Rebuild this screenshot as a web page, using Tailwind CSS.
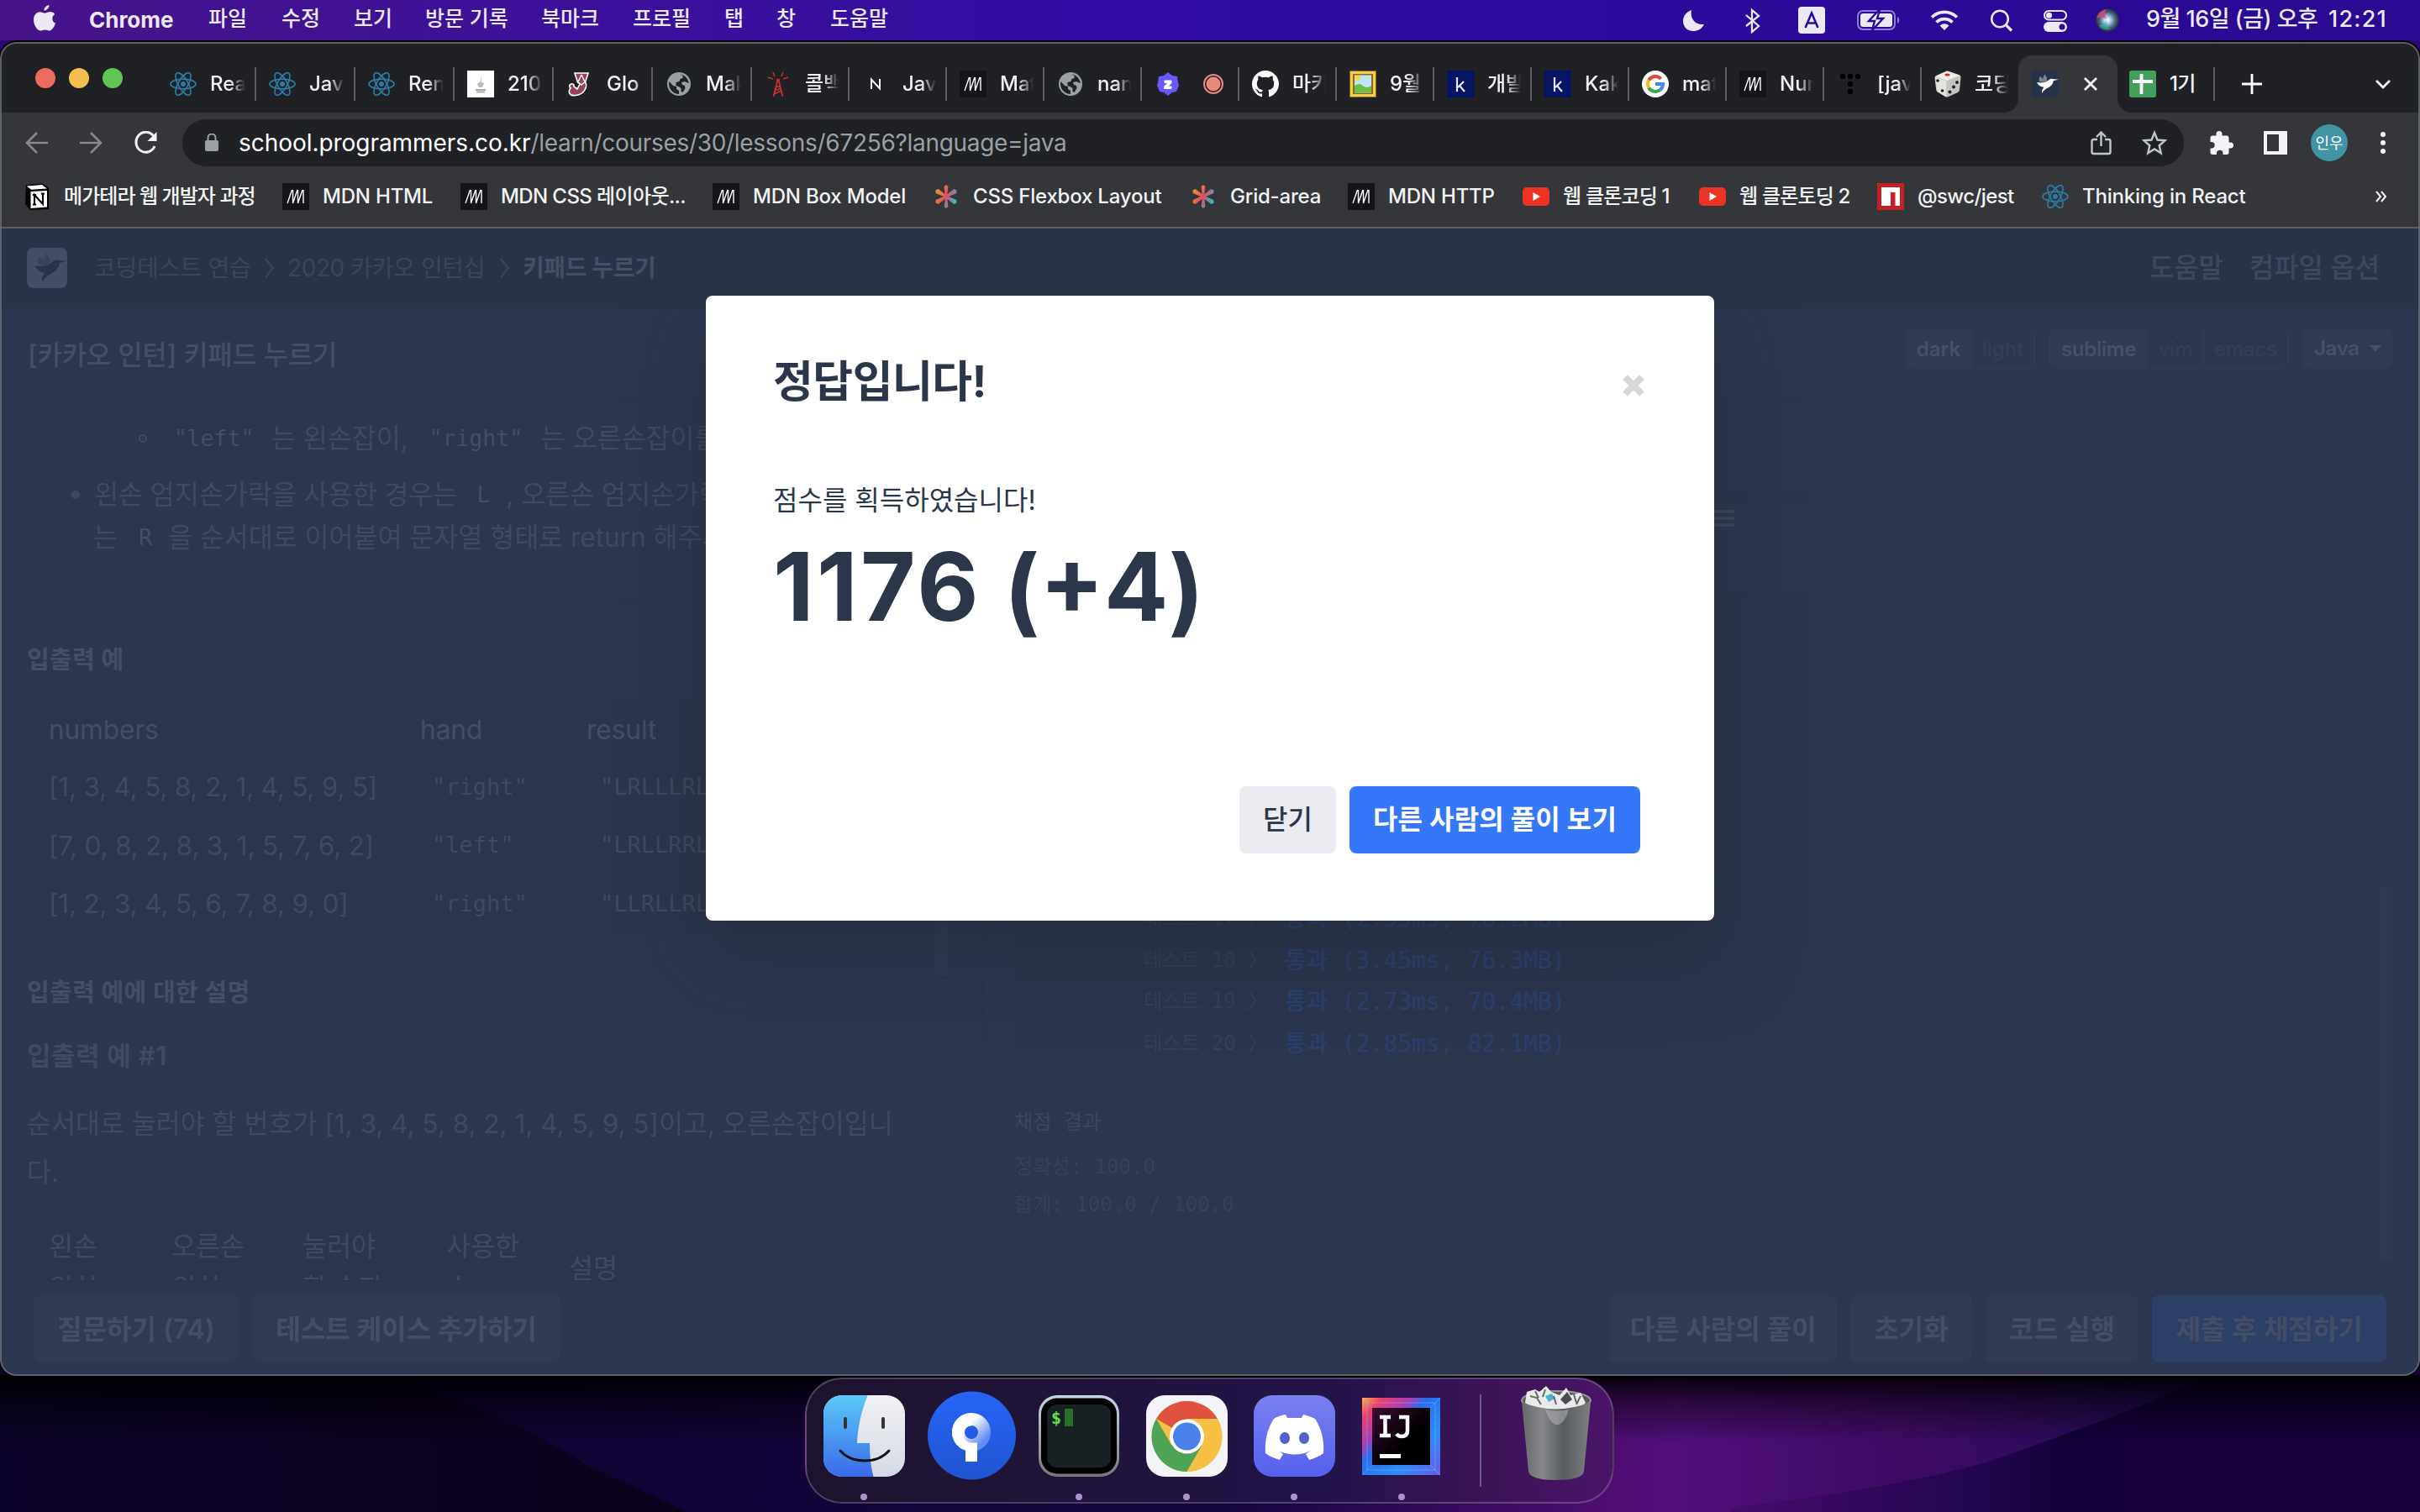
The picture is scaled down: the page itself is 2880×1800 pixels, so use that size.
<!DOCTYPE html>
<html lang="ko">
<head>
<meta charset="utf-8">
<title>키패드 누르기</title>
<script src="https://cdn.jsdelivr.net/npm/@tailwindcss/browser@4"></script>
</head>
<body class="relative h-[1800px] w-[2880px] overflow-hidden bg-[#0c0320] font-['Inter','Noto_Sans_CJK_KR',sans-serif]">

<!-- shared icon symbols -->
<svg class="absolute size-0">
  <defs><linearGradient id="ag" x1="0" y1=".2" x2="1" y2=".8"><stop offset=".1" stop-color="#ef8a2e"/><stop offset=".5" stop-color="#d9506a"/><stop offset=".9" stop-color="#39b5c4"/></linearGradient></defs>
  <symbol id="react" viewBox="0 0 32 32"><g fill="none" stroke="#2a7ba3" stroke-width="1.7"><ellipse cx="16" cy="16" rx="15" ry="5.8"/><ellipse cx="16" cy="16" rx="15" ry="5.8" transform="rotate(60 16 16)"/><ellipse cx="16" cy="16" rx="15" ry="5.8" transform="rotate(120 16 16)"/></g><circle cx="16" cy="16" r="3" fill="#2a7ba3"/></symbol>
  <symbol id="mdn" viewBox="0 0 32 32"><rect width="32" height="32" fill="#15141a"/><path d="M6 24 11.500 8M12.500 8V24M12.500 24 18 8M18.500 8V24M18.500 24 24 8M25 8V24" stroke="#fff" stroke-width="1.400" fill="none"/></symbol>
  <symbol id="globe" viewBox="0 0 32 32"><circle cx="16" cy="16" r="14" fill="#9aa0a6"/><path d="M4.500 13 9 18l4 1v3l3 2v4A12 12 0 0 1 4.500 13ZM17 4.200c6 .8 10 5.500 10.800 10.800L25 14l-2-1-4 1 1 3 3 1 .5 3-3 5-2-1v-4l-3-2-3-1v-4l4-1 1-3 3-1V6Z" fill="#202124"/></symbol>
  <symbol id="kicon" viewBox="0 0 32 32"><rect width="32" height="32" fill="#061463"/><path d="M12 8v17M20 13l-7 7M15 18l6 7" stroke="#e5e8ff" stroke-width="2.200" fill="none"/></symbol>
  <symbol id="yt" viewBox="0 0 32 32"><rect y="5" width="32" height="22" rx="5" fill="#ea3323"/><path d="m12.500 11 8.500 5-8.500 5Z" fill="#fff"/></symbol>
  <symbol id="aster" viewBox="0 0 32 32"><path d="M16 2l2.400 2-1 9 8-6 3.200 1.500-.4 3.400-9 4.100 9 4.100.4 3.400-3.200 1.500-8-6 1 9L16 30l-2.400-2 1-9-8 6-3.200-1.500.4-3.400 9-4.100-9-4.100-.4-3.400L6.600 7l8 6-1-9Z" fill="url(#ag)"/></symbol>
  <symbol id="bird" viewBox="0 0 32 32"><path d="M6 14C10 15 16.500 14.500 20 11.500c1.500-1.800 4-2.400 5.600-1.300l6.400.2-6.300 1.800c-.4 4.600-3.600 6.800-7 8.600-2.600 1.400-4.600 2.900-6.500 6.200-.8-3 .7-5.600 2.300-7.200C10.500 19.500 7.500 17 6 14Z"/><path d="M15.500 4.500c2 2.500 3 5 2.600 7.800l-3.600 1.200c-2-2.800-1.300-6 1-9ZM9.500 7c3 1.200 4.500 3.600 4.800 6.600l-5-.3C8.300 11 8.500 9 9.500 7Z" opacity=".4"/></symbol>
</svg>

<!-- wallpaper -->
<svg class="absolute inset-0 h-[1800px] w-[2880px]" viewBox="0 0 2880 1800">
  <defs>
    <linearGradient id="wl" x1="0" x2="1"><stop offset="0" stop-color="#0c0328"/><stop offset="1" stop-color="#0b011a"/></linearGradient>
    <linearGradient id="wm" x1="0" x2="1"><stop offset="0" stop-color="#100230"/><stop offset=".7" stop-color="#140540"/><stop offset="1" stop-color="#4a0e72"/></linearGradient>
    <linearGradient id="wp" gradientUnits="userSpaceOnUse" x1="1820" x2="2560" y1="0" y2="0"><stop offset="0" stop-color="#4b0b68"/><stop offset=".24" stop-color="#500f7c"/><stop offset=".6" stop-color="#3e0b66"/><stop offset="1" stop-color="#220a58"/></linearGradient>
    <linearGradient id="wr" gradientUnits="userSpaceOnUse" x1="2080" x2="2560" y1="0" y2="0"><stop offset="0" stop-color="#440c6c"/><stop offset=".55" stop-color="#200650"/><stop offset=".8" stop-color="#130138"/><stop offset="1" stop-color="#16003a"/></linearGradient>
    <linearGradient id="ws" x1="0" y1="0" x2="0" y2="1"><stop offset="0" stop-color="#000" stop-opacity=".92"/><stop offset=".4" stop-color="#000" stop-opacity=".5"/><stop offset="1" stop-color="#000" stop-opacity="0"/></linearGradient>
  </defs>
  <rect y="1600" width="900" height="200" fill="url(#wl)"/>
  <path d="M430 1630Q600 1680 700 1745L819 1800H1900V1630Z" fill="url(#wm)"/>
  <path d="M1800 1630H2880V1800H1880Z" fill="url(#wp)"/>
  <path d="M2880 1600V1800H2060V1795Q2300 1765 2387 1733L2500 1692Q2600 1655 2660 1620Z" fill="url(#wr)"/>
  <rect y="1637" width="2880" height="80" fill="url(#ws)"/>
  <rect y="0" width="2880" height="80" fill="#2a0a70"/>
</svg>

<!-- menu bar -->
<div class="relative flex h-12 items-center bg-[linear-gradient(90deg,#461488_0%,#3b119b_25%,#310da3_45%,#2b0a9a_75%,#290a90_100%)] text-[25px] font-medium text-[#ece8f6]">
  <svg class="ml-[39px] h-8 w-7 shrink-0 -translate-y-0.5" viewBox="0 0 28 32" fill="#ece8f6"><path d="M19.500 0c.2 3-2.600 6.600-6 6.600C13.200 3.500 16 .4 19.500 0ZM26.200 10.900c-4.300 2.700-3.600 8.900.9 10.700-1.200 3.600-4.100 9-7 9-2 0-2.900-1.200-5.400-1.200s-3.500 1.200-5.400 1.200C5.500 30.600 1 24 1 17.500 1 11.500 4.800 8.200 8.600 8.200c2.500 0 4.300 1.500 5.900 1.500 1.500 0 3.700-1.600 6.600-1.600 1.800 0 3.900 1 5.100 2.800Z"/></svg>
  <span class="ml-[39px] w-[142px] -translate-y-px text-[26px] font-bold tracking-[0px]">Chrome</span>
  <span class="w-[87px] -translate-y-px">파일</span><span class="w-[86px] -translate-y-px">수정</span><span class="w-[85px] -translate-y-px">보기</span><span class="w-[138px] -translate-y-px whitespace-nowrap">방문 기록</span><span class="w-[109px] -translate-y-px">북마크</span><span class="w-[109px] -translate-y-px">프로필</span><span class="w-[62px] -translate-y-px">탭</span><span class="w-[64px] -translate-y-px">창</span><span class="-translate-y-px">도움말</span>
  <div class="absolute right-0 top-0 flex h-12 w-[880px] items-center text-[27px]">
    <svg class="ml-[1px] h-12 w-[540px] shrink-0" viewBox="2001 0 540 48" fill="#ece8f6">
      <path d="M2013 12c-2 10 4 18 15 17-3 6-8 8-13 8-7 0-12-5-12-12 0-6 4-11 10-13Z"/>
      <path d="M2078 18l15 13-8 7V12l8 7-15 12" fill="none" stroke="#ece8f6" stroke-width="2.300"/>
      <rect x="2140" y="8" width="32" height="32" rx="4"/>
      <path d="M2148.500 33 2156 15.500 2163.500 33M2151 27.500h10" fill="none" stroke="#2b0a9a" stroke-width="2.500"/>
      <rect x="2211" y="13" width="44" height="22" rx="6" fill="none" stroke="#8d7fd0" stroke-width="2"/><path d="M2258 20c3 1 3 7 0 8Z" fill="#8d7fd0"/><rect x="2214" y="16" width="38" height="16" rx="3"/>
      <path d="M2236 12l-12 13h7l-3 11 13-14h-7l3-10Z" stroke="#2b0a9a" stroke-width="2.400"/>
      <g fill="none" stroke="#ece8f6" stroke-width="3.800"><path d="M2299 20.500a21.500 21.500 0 0 1 30 0M2304.500 26.500a13.500 13.500 0 0 1 19 0"/></g><path d="M2308.500 30.500a8 8 0 0 1 11 0l-5.500 5.500Z"/>
      <circle cx="2380" cy="22.500" r="9.800" fill="none" stroke="#ece8f6" stroke-width="2.500"/><path d="m2387 29.500 7 7" stroke="#ece8f6" stroke-width="3.200"/>
      <rect x="2433" y="13" width="26" height="10.500" rx="5.200" fill="none" stroke="#ece8f6" stroke-width="2"/><circle cx="2438.500" cy="18.200" r="3.500"/><rect x="2432" y="26" width="28" height="12" rx="6"/><circle cx="2454" cy="32" r="3.500" fill="#2b0a9a"/>
      <defs><radialGradient id="siri"><stop offset="0" stop-color="#fff"/><stop offset=".3" stop-color="#a9c8e8"/><stop offset=".65" stop-color="#4a6a8c"/><stop offset="1" stop-color="#2a2540"/></radialGradient></defs>
      <g transform="translate(-12.500)"><circle cx="2520.500" cy="24" r="14" fill="url(#siri)"/><path d="M2508 22c0-6 7-11 12-11-4 3-3 8 0 12-4-3-8-3-12-1Z" fill="#d94a6b" opacity=".85"/><path d="M2510 30c4 5 9 6 14 5-4-2-5-7-4-11-3 4-6 6-10 6Z" fill="#2dbd9b" opacity=".6"/></g>
    </svg>
    <span class="ml-[13px] w-[217px] -translate-y-px whitespace-nowrap tracking-[-0.5px]">9월 16일 (금) 오후</span><span class="-translate-y-px whitespace-nowrap tracking-[1.2px]">12:21</span>
  </div>
</div>

<!-- browser window -->
<div class="relative mt-[2px] flex h-[1588px] flex-col overflow-hidden rounded-[20px] bg-[#35363a] shadow-[0_0_0_2px_#000]">

  <!-- tab strip -->
  <div class="flex h-[84px] shrink-0 items-end bg-[#202124] text-[24px] font-medium text-[#f1f3f4]">
    <div class="flex h-[82px] w-[187px] shrink-0 gap-4 pl-[42px] pt-[29px]"><i class="size-6 rounded-full bg-[#ed6a5e]"></i><i class="size-6 rounded-full bg-[#f5bf4f]"></i><i class="size-6 rounded-full bg-[#61c554]"></i></div>
    <div class="flex h-[68px] w-[118px] shrink-0 items-center pl-[15px]"><svg class="size-8 shrink-0"><use href="#react"/></svg><span class="ml-4 w-[42px] overflow-hidden whitespace-nowrap [mask-image:linear-gradient(90deg,#000_55%,transparent)]">Rea</span><i class="ml-auto h-10 w-[2px] bg-[#5b5c5f]"></i></div>
    <div class="flex h-[68px] w-[118px] shrink-0 items-center pl-[15px]"><svg class="size-8 shrink-0"><use href="#react"/></svg><span class="ml-4 w-[42px] overflow-hidden whitespace-nowrap [mask-image:linear-gradient(90deg,#000_55%,transparent)]">Jav</span><i class="ml-auto h-10 w-[2px] bg-[#5b5c5f]"></i></div>
    <div class="flex h-[68px] w-[118px] shrink-0 items-center pl-[15px]"><svg class="size-8 shrink-0"><use href="#react"/></svg><span class="ml-4 w-[42px] overflow-hidden whitespace-nowrap [mask-image:linear-gradient(90deg,#000_55%,transparent)]">Ren</span><i class="ml-auto h-10 w-[2px] bg-[#5b5c5f]"></i></div>
    <div class="flex h-[68px] w-[118px] shrink-0 items-center pl-[15px]"><svg class="size-8 shrink-0" viewBox="0 0 32 32"><rect width="32" height="32" fill="#fff"/><path d="M17 6v8l3 1-2 5h-4l-2-4 4-3Z" fill="#bbb"/><path d="M10 23h12M11 25.500h10" stroke="#aaa" stroke-width="2"/></svg><span class="ml-4 w-[42px] overflow-hidden whitespace-nowrap [mask-image:linear-gradient(90deg,#000_55%,transparent)]">210</span><i class="ml-auto h-10 w-[2px] bg-[#5b5c5f]"></i></div>
    <div class="flex h-[68px] w-[118px] shrink-0 items-center pl-[15px]"><svg class="size-8 shrink-0" viewBox="0 0 32 32"><path d="M10 3h16l-3.500 11c2.500 3 1 8-2.500 11.500C16 30 6 31 4 27.500c-1.500-3-.5-5 1-6.500a2.800 2.800 0 0 1 .5-5c2.300-1 4.200 1 3.500 3l4 3 3-6-2.500-2Z" fill="#99425b" stroke="#fff" stroke-width="1.600"/><path d="M18 5l-4 8.500M18 5l4 8.500M14.500 14l3.500 3 3.500-3" stroke="#fff" stroke-width="1.400" fill="none"/></svg><span class="ml-4 w-[42px] overflow-hidden whitespace-nowrap [mask-image:linear-gradient(90deg,#000_70%,#fff8)]">Glo</span><i class="ml-auto h-10 w-[2px] bg-[#5b5c5f]"></i></div>
    <div class="flex h-[68px] w-[118px] shrink-0 items-center pl-[15px]"><svg class="size-8 shrink-0"><use href="#globe"/></svg><span class="ml-4 w-[42px] overflow-hidden whitespace-nowrap [mask-image:linear-gradient(90deg,#000_55%,transparent)]">Mak</span><i class="ml-auto h-10 w-[2px] bg-[#5b5c5f]"></i></div>
    <div class="flex h-[68px] w-[116px] shrink-0 items-center pl-[15px]"><svg class="size-8 shrink-0" viewBox="0 0 32 32" fill="none" stroke="#c4302b" stroke-width="1.800"><path d="M15 13 10.500 31M17 13l4.500 18M13 19h6M12 24l7.500-3M11.500 28l8-4"/><circle cx="16" cy="11.500" r="1.200" fill="#c4302b"/><path d="M12 7 10 2M20 7l2-5M10 10 4 8M22 10l6-2" stroke-width="1.600"/></svg><span class="ml-4 w-[40px] overflow-hidden whitespace-nowrap [mask-image:linear-gradient(90deg,#000_55%,transparent)]">콜백</span><i class="ml-auto h-10 w-[2px] bg-[#5b5c5f]"></i></div>
    <div class="flex h-[68px] w-[116px] shrink-0 items-center pl-[15px]"><svg class="size-8 shrink-0" viewBox="0 0 32 32"><path d="M11 22V10.500L21 21.500V10" fill="none" stroke="#fff" stroke-width="2"/></svg><span class="ml-4 w-[40px] overflow-hidden whitespace-nowrap [mask-image:linear-gradient(90deg,#000_55%,transparent)]">Jav</span><i class="ml-auto h-10 w-[2px] bg-[#5b5c5f]"></i></div>
    <div class="flex h-[68px] w-[116px] shrink-0 items-center pl-[15px]"><svg class="size-8 shrink-0"><use href="#mdn"/></svg><span class="ml-4 w-[40px] overflow-hidden whitespace-nowrap [mask-image:linear-gradient(90deg,#000_55%,transparent)]">Mat</span><i class="ml-auto h-10 w-[2px] bg-[#5b5c5f]"></i></div>
    <div class="flex h-[68px] w-[116px] shrink-0 items-center pl-[15px]"><svg class="size-8 shrink-0"><use href="#globe"/></svg><span class="ml-4 w-[40px] overflow-hidden whitespace-nowrap [mask-image:linear-gradient(90deg,#000_55%,transparent)]">nan</span><i class="ml-auto h-10 w-[2px] bg-[#5b5c5f]"></i></div>
    <div class="flex h-[68px] w-[116px] shrink-0 items-center pl-[15px]"><svg class="size-8 shrink-0" viewBox="0 0 32 32"><path d="m16 2 5 4 6 1 1 7 1 4-3 7-5 1-5 4-5-4-5-1-3-7 1-4 1-7 6-1Z" fill="#6758ff"/><path d="M12 12h8v2.500L16 19h4v2.500h-8.500V19l4.500-4.500h-4Z" fill="#fff" stroke="#fff"/></svg><svg class="ml-[22px] size-8 shrink-0" viewBox="0 0 32 32"><circle cx="16" cy="16" r="11" fill="none" stroke="#e8897e" stroke-width="2"/><circle cx="16" cy="16" r="8.500" fill="#e8897e"/></svg><i class="ml-auto h-10 w-[2px] bg-[#5b5c5f]"></i></div>
    <div class="flex h-[68px] w-[116px] shrink-0 items-center pl-[15px]"><svg class="size-8 shrink-0" viewBox="0 0 16 16" fill="#fff"><path d="M8 0C3.580 0 0 3.580 0 8c0 3.540 2.290 6.530 5.470 7.590.4.070.55-.17.55-.38 0-.19-.01-.82-.01-1.490-2.010.37-2.530-.49-2.690-.94-.09-.23-.48-.94-.82-1.130-.28-.15-.68-.52-.01-.53.63-.01 1.080.58 1.230.82.72 1.210 1.870.87 2.330.66.07-.52.28-.87.51-1.070-1.780-.2-3.640-.89-3.640-3.950 0-.87.31-1.590.82-2.150-.08-.2-.36-1.020.08-2.120 0 0 .67-.21 2.200.82.64-.18 1.320-.27 2-.27s1.360.09 2 .27c1.530-1.040 2.200-.82 2.200-.82.44 1.100.16 1.920.08 2.120.51.56.82 1.270.82 2.150 0 3.070-1.870 3.750-3.650 3.950.29.25.54.73.54 1.480 0 1.070-.01 1.930-.01 2.200 0 .21.15.46.55.38A8.010 8.010 0 0 0 16 8c0-4.420-3.580-8-8-8Z"/></svg><span class="ml-4 w-[40px] overflow-hidden whitespace-nowrap [mask-image:linear-gradient(90deg,#000_55%,transparent)]">마키</span><i class="ml-auto h-10 w-[2px] bg-[#5b5c5f]"></i></div>
    <div class="flex h-[68px] w-[116px] shrink-0 items-center pl-[15px]"><svg class="size-8 shrink-0" viewBox="0 0 32 32"><rect width="32" height="32" rx="1" fill="#8b6a1d"/><rect x="2.500" y="2.500" width="27" height="27" fill="none" stroke="#f2cf4d" stroke-width="3"/><rect x="6" y="5.500" width="20" height="21" fill="#bfe6f5"/><path d="M6 18q6-4 10 0t10 0v8.500H6Z" fill="#6cc04a"/><circle cx="9.500" cy="9" r="3" fill="#f7d83c"/></svg><span class="ml-4 w-[40px] overflow-hidden whitespace-nowrap [mask-image:linear-gradient(90deg,#000_55%,transparent)]">9월</span><i class="ml-auto h-10 w-[2px] bg-[#5b5c5f]"></i></div>
    <div class="flex h-[68px] w-[116px] shrink-0 items-center pl-[15px]"><svg class="size-8 shrink-0"><use href="#kicon"/></svg><span class="ml-4 w-[40px] overflow-hidden whitespace-nowrap [mask-image:linear-gradient(90deg,#000_55%,transparent)]">개발</span><i class="ml-auto h-10 w-[2px] bg-[#5b5c5f]"></i></div>
    <div class="flex h-[68px] w-[116px] shrink-0 items-center pl-[15px]"><svg class="size-8 shrink-0"><use href="#kicon"/></svg><span class="ml-4 w-[40px] overflow-hidden whitespace-nowrap [mask-image:linear-gradient(90deg,#000_55%,transparent)]">Kak</span><i class="ml-auto h-10 w-[2px] bg-[#5b5c5f]"></i></div>
    <div class="flex h-[68px] w-[116px] shrink-0 items-center pl-[15px]"><svg class="size-8 shrink-0" viewBox="0 0 32 32"><circle cx="16" cy="16" r="16" fill="#fff"/><g fill="none" stroke-width="4"><path d="M8.200 11.500A9 9 0 0 1 22.500 9.800" stroke="#ea4335"/><path d="M8.200 20.500a9 9 0 0 1 0-9" stroke="#fbbc05"/><path d="M22 22.700a9 9 0 0 1-13.800-2.200" stroke="#34a853"/><path d="M16 16h9a9 9 0 0 1-3.200 6.900" stroke="#4285f4"/></g></svg><span class="ml-4 w-[40px] overflow-hidden whitespace-nowrap [mask-image:linear-gradient(90deg,#000_55%,transparent)]">mat</span><i class="ml-auto h-10 w-[2px] bg-[#5b5c5f]"></i></div>
    <div class="flex h-[68px] w-[116px] shrink-0 items-center pl-[15px]"><svg class="size-8 shrink-0"><use href="#mdn"/></svg><span class="ml-4 w-[40px] overflow-hidden whitespace-nowrap [mask-image:linear-gradient(90deg,#000_55%,transparent)]">Num</span><i class="ml-auto h-10 w-[2px] bg-[#5b5c5f]"></i></div>
    <div class="flex h-[68px] w-[116px] shrink-0 items-center pl-[15px]"><svg class="size-8 shrink-0" viewBox="0 0 32 32" fill="#000"><circle cx="7" cy="7" r="3.200"/><circle cx="16" cy="7" r="3.200"/><circle cx="25" cy="7" r="3.200"/><circle cx="16" cy="16" r="3.200"/><circle cx="16" cy="25" r="3.200"/></svg><span class="ml-4 w-[40px] overflow-hidden whitespace-nowrap [mask-image:linear-gradient(90deg,#000_60%,transparent)]">[jav</span><i class="ml-auto h-10 w-[2px] bg-[#5b5c5f]"></i></div>
    <div class="flex h-[68px] w-[115px] shrink-0 items-center pl-[15px]"><svg class="size-8 shrink-0" viewBox="0 0 32 32"><path d="M16 .5 29.500 5c1.500.8 2 1.500 2 3l-1.500 15c-.2 1.500-1 2-2 3L16.500 31.200c-1 .5-2 .5-3 0L4 25.500c-1-.7-1.700-1.500-1.900-3L.5 9c0-1.500.5-2.500 1.700-3L14 .7Z" fill="#c4c4c1"/><path d="M15.500.5 30 6 15 12 1.500 7Z" fill="#ececea"/><path d="M1 7.500 14.500 12.500 14 31.500 3.500 25Z" fill="#e2e2df"/><ellipse cx="15.500" cy="5" rx="3" ry="1.500" fill="#d22"/><g fill="#222"><circle cx="4" cy="12" r="1.800"/><circle cx="9.500" cy="24" r="1.800"/><circle cx="27" cy="14" r="2"/><circle cx="23" cy="19.500" r="2"/><circle cx="18.500" cy="25.500" r="2"/></g></svg><span class="ml-4 w-[40px] overflow-hidden whitespace-nowrap [mask-image:linear-gradient(90deg,#000_55%,transparent)]">코딩</span></div>
    <div class="relative flex h-[68px] w-[118px] shrink-0 items-center rounded-t-2xl bg-[#35363a] pl-[16px]">
      <i class="absolute -left-4 bottom-0 size-4 bg-[radial-gradient(circle_at_0_0,transparent_15.500px,#35363a_16px)]"></i><i class="absolute -right-4 bottom-0 size-4 bg-[radial-gradient(circle_at_100%_0,transparent_15.500px,#35363a_16px)]"></i>
      <svg class="size-8 rounded bg-[#263247] fill-white"><use href="#bird"/></svg>
      <svg class="ml-[29px] size-[18px]" viewBox="0 0 18 18"><path d="M2 2l14 14M16 2 2 16" stroke="#f1f3f4" stroke-width="2.800"/></svg>
    </div>
    <div class="flex h-[68px] w-[116px] shrink-0 items-center pl-[14px]"><svg class="size-8 shrink-0" viewBox="0 0 32 32"><rect width="32" height="32" rx="3" fill="#43a05c"/><path d="M14.500 4v24M4 13h24" stroke="#fff" stroke-width="3.800"/></svg><span class="ml-4 w-[42px] whitespace-nowrap tracking-[-0.8px]">1기</span><i class="ml-auto h-10 w-[2px] bg-[#5b5c5f]"></i></div>
    <svg class="ml-[32px] mb-[22px] size-6 shrink-0" viewBox="0 0 24 24"><path d="M12 0v24M0 12h24" stroke="#fff" stroke-width="2.800"/></svg>
    <svg class="ml-[135px] mb-[25px] size-[18px] shrink-0" viewBox="0 0 18 18"><path d="M1 5l8 8 8-8" stroke="#f1f3f4" stroke-width="2.800" fill="none"/></svg>
  </div>

  <!-- address row -->
  <div class="flex h-[72px] shrink-0 items-center">
    <svg class="ml-[30px] h-7 w-[158px] shrink-0" viewBox="0 0 158 28" fill="none" stroke-width="2.600"><path d="M27 14H2M14 2 2 14l12 12M65 14h25M78 2l12 12-12 12" stroke="#87888b"/><path d="M153 6.500A11.500 12 0 1 0 154 18" stroke="#f1f3f4" stroke-width="3"/><path d="M156.500 1v11h-11Z" fill="#f1f3f4"/></svg>
    <div class="ml-[29px] flex h-14 w-[2382px] shrink-0 items-center rounded-full bg-[#202124] text-[28px] text-[#9aa0a6]">
      <svg class="ml-[27px] h-[22px] w-4" viewBox="0 0 16 22"><rect y="8" width="16" height="13" rx="2" fill="#9aa0a6"/><path d="M3.500 8V5a4.500 4.500 0 0 1 9 0v3" stroke="#9aa0a6" stroke-width="2" fill="none"/></svg>
      <span class="ml-6 whitespace-nowrap tracking-[-0.3px]"><span class="tracking-[-0.05px] text-white">school.programmers.co.kr</span>/learn/courses/30/lessons/67256?language=java</span>
      <svg class="ml-auto mr-[19px] h-[30px] w-[92px]" viewBox="0 0 92 30" fill="none" stroke="#c3c6c9" stroke-width="2.400"><path d="M8 11H3.500A2 2 0 0 0 1.500 13v13a2 2 0 0 0 2 2h18a2 2 0 0 0 2-2V13a2 2 0 0 0-2-2H17M12.500 19V3M7 8l5.500-5.500L18 8"/><path d="m76 3 3.500 8.500 9 .8-6.800 6 2 8.900-7.700-4.700-7.700 4.700 2-8.900-6.800-6 9-.8Z"/></svg>
    </div>
    <svg class="ml-[30px] size-[30px] shrink-0" viewBox="0 0 30 30"><path d="M24.500 14.500h-2V9a2.500 2.500 0 0 0-2.500-2.500h-5.500v-2a3.500 3.500 0 0 0-7 0v2H3A2.500 2.500 0 0 0 .5 9v5h2a3.800 3.800 0 0 1 0 7.500h-2v5A2.500 2.500 0 0 0 3 29h5v-2a3.800 3.800 0 0 1 7.500 0v2H20a2.500 2.500 0 0 0 2.500-2.500v-5h2a3.500 3.500 0 0 0 0-7Z" fill="#f1f3f4" transform="translate(1)"/></svg>
    <svg class="ml-[35px] size-7 shrink-0" viewBox="0 0 28 28"><path d="M0 0h28v28H0ZM4 4v20h14V4Z" fill="#f1f3f4" fill-rule="evenodd"/></svg>
    <div class="ml-[28px] flex size-11 shrink-0 items-center justify-center rounded-full bg-[#4094a6] text-[18px] text-white">인우</div>
    <svg class="ml-[38px] h-7 w-2 shrink-0" viewBox="0 0 8 28" fill="#f1f3f4"><circle cx="4" cy="4" r="3"/><circle cx="4" cy="14" r="3"/><circle cx="4" cy="24" r="3"/></svg>
  </div>

  <!-- bookmarks -->
  <div class="flex h-[66px] shrink-0 items-center border-b-2 border-[#5f5f61] pb-2 pl-[28px] text-[24px] leading-8 font-medium tracking-[-0.2px] whitespace-nowrap text-[#f1f3f4]">
    <div class="flex w-[308px] shrink-0 gap-4"><svg class="size-8" viewBox="0 0 32 32"><path d="M3 2 23 .5l7 5.500v25L8 32l-6-7Z" fill="#000"/><path d="M4 3.500 22 2l6 4.500-19 1.200Z" fill="#fff"/><path d="M8.500 10 28 9v19.500L8.500 30Z" fill="#fff"/><path d="M13 25.500V14l10 11V12.500M11 14h4M21 12.500h4M11 25.500h4" stroke="#000" stroke-width="2.200" fill="none"/></svg><span class="tracking-[-0.95px]">메가테라 웹 개발자 과정</span></div>
    <div class="flex w-[212px] shrink-0 gap-4"><svg class="size-8"><use href="#mdn"/></svg><span>MDN HTML</span></div>
    <div class="flex w-[300px] shrink-0 gap-4"><svg class="size-8"><use href="#mdn"/></svg><span class="tracking-[-0.6px]">MDN CSS 레이아웃...</span></div>
    <div class="flex w-[262px] shrink-0 gap-4"><svg class="size-8"><use href="#mdn"/></svg><span>MDN Box Model</span></div>
    <div class="flex w-[306px] shrink-0 gap-4"><svg class="size-8"><use href="#aster"/></svg><span>CSS Flexbox Layout</span></div>
    <div class="flex w-[188px] shrink-0 gap-4"><svg class="size-8"><use href="#aster"/></svg><span>Grid-area</span></div>
    <div class="flex w-[208px] shrink-0 gap-4"><svg class="size-8"><use href="#mdn"/></svg><span>MDN HTTP</span></div>
    <div class="flex w-[210px] shrink-0 gap-4"><svg class="size-8"><use href="#yt"/></svg><span class="tracking-[-0.8px]">웹 클론코딩 1</span></div>
    <div class="flex w-[212px] shrink-0 gap-4"><svg class="size-8"><use href="#yt"/></svg><span class="tracking-[-0.8px]">웹 클론토딩 2</span></div>
    <div class="flex w-[196px] shrink-0 gap-4"><svg class="size-8" viewBox="0 0 32 32"><rect width="32" height="32" fill="#c12127"/><path d="M5 5h22v22h-5.500V11H16v16H5Z" fill="#fff"/></svg><span class="tracking-[-0.6px]">@swc/jest</span></div>
    <div class="flex w-[397px] shrink-0 gap-4"><svg class="size-8"><use href="#react"/></svg><span>Thinking in React</span></div>
    <svg class="h-3.5 w-3.5 shrink-0" viewBox="0 0 14 14"><path d="M1 1l5 6-5 6M7 1l5 6-5 6" stroke="#f1f3f4" stroke-width="2" fill="none"/></svg>
  </div>

  <!-- page, dimmed behind the dialog -->
  <div class="flex h-[1366px] flex-col bg-[#2c364e] text-[#414b61]">
    <header class="flex h-[95px] shrink-0 items-center bg-[#283347] pb-0.5 pl-8 text-[28px] whitespace-nowrap text-[#3b455a]">
      <svg class="mr-[32px] size-12 rounded-lg bg-[#454e64] fill-[#283347]"><use href="#bird"/></svg>
      <span class="w-[203px] tracking-[-0.2px]">코딩테스트 연습</span>
      <svg class="h-6 w-3" viewBox="0 0 12 24"><path d="M1 1l9 11-9 11" stroke="#3b455a" stroke-width="2" fill="none"/></svg>
      <span class="ml-[15px] w-[253px] tracking-[-0.4px]">2020 카카오 인턴십</span>
      <svg class="h-6 w-3" viewBox="0 0 12 24"><path d="M1 1l9 11-9 11" stroke="#3b455a" stroke-width="2" fill="none"/></svg>
      <span class="ml-[15px] font-bold tracking-[-0.4px] text-[#454e64]">키패드 누르기</span>
      <div class="ml-auto flex gap-[31px] pr-12 text-[32px] font-medium tracking-[-0.1px] text-[#3e485d]"><span>도움말</span><span>컴파일 옵션</span></div>
    </header>
    <div class="flex h-[110px] shrink-0 border-b-2 border-[#2a344a] pl-[33px] text-[#454e64]">
      <h2 class="text-[32px] leading-[111px] font-medium tracking-[-0.3px]">[카카오 인턴] 키패드 누르기</h2>
      <div class="mt-[24px] ml-auto flex h-12 gap-4 pr-8 text-[24px] leading-[46px] font-semibold whitespace-nowrap text-[#475066]">
        <div class="flex w-[155px] overflow-hidden rounded-lg border-2 border-[#303a52]"><span class="w-[78px] bg-[#303a52] pr-0.5 text-center">dark</span><span class="flex-1 text-center font-medium text-[#343e57]">light</span></div>
        <div class="flex w-[286px] overflow-hidden rounded-lg border-2 border-[#303a52]"><span class="w-[117px] bg-[#303a52] pr-0.5 text-center tracking-[-0.3px]">sublime</span><span class="w-[66px] border-r-2 border-[#303a52] text-center font-medium text-[#343e57]">vim</span><span class="flex-1 text-center font-medium text-[#343e57]">emacs</span></div>
        <div class="flex w-[108px] items-center gap-3 rounded-lg bg-[#303a52] pl-[14px]"><span class="tracking-[-0.3px]">Java</span><i class="border-x-[7px] border-t-[8px] border-x-transparent border-t-[#475066]"></i></div>
      </div>
    </div>

    <div class="flex h-[1047px] shrink-0">
      <!-- problem statement -->
      <section class="relative h-[1047px] w-[1170px] shrink-0 overflow-hidden border-r-2 border-[#2a344a] pl-8 text-[31.500px] whitespace-nowrap text-[#3f495f]">
        <div class="mt-[22px] flex h-[46px] items-center pl-[133px]">
          <i class="size-2.5 rounded-full border-2 border-[#3f495f]"></i>
          <code class="ml-[16px] mr-[5px] flex h-11 w-[127px] items-center justify-center rounded-lg bg-[#2b354c] font-['DejaVu_Sans_Mono'] text-[26.500px] text-[#444d63]">"left"</code>는 왼손잡이,
          <code class="ml-[9px] mr-[6px] flex h-11 w-[143px] items-center justify-center rounded-lg bg-[#2b354c] font-['DejaVu_Sans_Mono'] text-[26.500px] text-[#444d63]">"right"</code>는 오른손잡이를
        </div>
        <div class="mt-[21px] flex h-[46px] items-center pl-[53px]">
          <i class="mr-[17px] size-2.5 rounded-full bg-[#3f495f]"></i>왼손 엄지손가락을 사용한 경우는
          <code class="ml-[9px] mr-[5px] flex h-11 w-11 items-center justify-center rounded-lg bg-[#2b354c] font-['DejaVu_Sans_Mono'] text-[26.500px] text-[#444d63]">L</code>, 오른손 엄지손가락
        </div>
        <div class="mt-[5px] flex h-[46px] items-center pl-[79px]">는
          <code class="ml-[11px] mr-[5px] flex h-11 w-11 items-center justify-center rounded-lg bg-[#2b354c] font-['DejaVu_Sans_Mono'] text-[26.500px] text-[#444d63]">R</code>을 순서대로 이어붙여 문자열 형태로 return 해주세요
        </div>
        <hr class="mt-[51px] mr-[60px] border-t-2 border-[#2a344a]">
        <h3 class="mt-[50px] text-[29px] leading-10 font-bold tracking-[0.4px] text-[#454e64]">입출력 예</h3>
        <div class="mt-[27px] grid h-[278px] w-[940px] grid-cols-[442px_198px_1fr] grid-rows-[67px_70px_69px_70px] items-center border-2 border-[#2a344b] bg-[#2b354c] pl-[24px] text-[#3f495f]">
          <span class="text-[#444d63]">numbers</span><span class="text-[#444d63]">hand</span><span class="text-[#444d63]">result</span>
          <span class="tracking-[-0.2px]">[1, 3, 4, 5, 8, 2, 1, 4, 5, 9, 5]</span><code class="pl-[14px] font-['DejaVu_Sans_Mono'] text-[27px]">"right"</code><code class="pl-[16px] font-['DejaVu_Sans_Mono'] text-[27px]">"LRLLLRLLRRL"</code>
          <span class="tracking-[-0.2px]">[7, 0, 8, 2, 8, 3, 1, 5, 7, 6, 2]</span><code class="pl-[14px] font-['DejaVu_Sans_Mono'] text-[27px]">"left"</code><code class="pl-[16px] font-['DejaVu_Sans_Mono'] text-[27px]">"LRLLRRLLLRR"</code>
          <span class="tracking-[-0.2px]">[1, 2, 3, 4, 5, 6, 7, 8, 9, 0]</span><code class="pl-[14px] font-['DejaVu_Sans_Mono'] text-[27px]">"right"</code><code class="pl-[16px] font-['DejaVu_Sans_Mono'] text-[27px]">"LLRLLRLLRL"</code>
        </div>
        <h3 class="mt-[51px] text-[29px] leading-10 font-bold tracking-[0.4px] text-[#454e64]">입출력 예에 대한 설명</h3>
        <h4 class="mt-[35px] text-[31px] leading-10 font-semibold tracking-[0.5px]">입출력 예 #1</h4>
        <p class="mt-[32px] leading-[58px]">순서대로 눌러야 할 번호가 [1, 3, 4, 5, 8, 2, 1, 4, 5, 9, 5]이고, 오른손잡이입니<br>다.</p>
        <div class="mt-[26px] grid h-[110px] w-[1046px] grid-cols-[146px_156px_171px_146px_1fr] border-2 border-[#2a344b] bg-[#2b354c] pl-[24px] pt-[6px] leading-[50px]">
          <span>왼손<br>위치</span><span>오른손<br>위치</span><span>눌러야<br>할 숫자</span><span>사용한<br>손</span><span class="pt-[26px]">설명</span>
        </div>
        <i class="absolute left-[1113px] top-[430px] h-[255px] w-[15px] rounded bg-[#303a52]"></i>
      </section>
      <!-- editor and result -->
      <section class="flex-1 font-['DejaVu_Sans_Mono','Noto_Sans_CJK_KR'] whitespace-nowrap">
        <div class="h-[107px] bg-[#2c364e]"></div>
        <div class="h-4 border-y-2 border-[#2a344a] bg-[#2b354c]"></div>
        <div class="flex h-[107px] flex-col gap-1 border-b-2 border-[#2a344a] pl-[853px] pt-[7px]"><i class="h-1 w-[41px] bg-[#3c465c]"></i><i class="h-1 w-[41px] bg-[#3c465c]"></i><i class="h-1 w-[41px] bg-[#3c465c]"></i></div>
        <div class="flex">
          <div class="ml-[38px] h-[562px] w-[1593px] border-b-2 border-r-2 border-[#2a344a] bg-[#2b354c] pt-[362px]">
            <div class="flex h-[49.500px] items-center text-[24px] leading-[49px]"><span class="w-[321px] pl-[153px] text-[#353f56]">테스트 17 〉</span><span class="text-[28px] font-medium tracking-[-0.2px] text-[#2b4074]">통과 (2.95ms, 78.2MB)</span></div>
            <div class="flex h-[49.500px] items-center text-[24px] leading-[49px]"><span class="w-[321px] pl-[153px] text-[#353f56]">테스트 18 〉</span><span class="text-[28px] font-medium tracking-[-0.2px] text-[#2b4074]">통과 (3.45ms, 76.3MB)</span></div>
            <div class="flex h-[49.500px] items-center text-[24px] leading-[49px]"><span class="w-[321px] pl-[153px] text-[#353f56]">테스트 19 〉</span><span class="text-[28px] font-medium tracking-[-0.2px] text-[#2b4070]">통과 (2.73ms, 70.4MB)</span></div>
            <div class="flex h-[49.500px] items-center text-[24px] leading-[49px]"><span class="w-[321px] pl-[153px] text-[#353f56]">테스트 20 〉</span><span class="text-[28px] font-medium tracking-[-0.2px] text-[#2b3f6c]">통과 (2.85ms, 82.1MB)</span></div>
          </div>
          <i class="ml-[31px] mt-[348px] h-[446px] w-[15px] rounded bg-[#2f3951]"></i>
        </div>
        <div class="-mt-[232px] flex flex-col pl-[37px] text-[24px] leading-[45px] tracking-[0.05px] text-[#3c465c]"><p class="mt-[45px]">채점 결과</p><p class="mt-[8px] text-[#364158]">정확성: 100.0</p><p class="text-[#364158]">합계: 100.0 / 100.0</p></div>
      </section>
    </div>

    <footer class="flex flex-1 gap-4 border-t-2 border-[#2a344a] pt-4 pl-10 text-[32px] leading-[81px] font-semibold whitespace-nowrap text-[#454e64]">
      <span class="h-20 w-[244px] rounded-lg bg-[#303a52] text-center">질문하기 (74)</span>
      <span class="h-20 w-[367px] rounded-lg bg-[#303a52] text-center">테스트 케이스 추가하기</span>
      <span class="ml-auto h-20 w-[271px] rounded-lg bg-[#303a52] text-center">다른 사람의 풀이</span>
      <span class="h-20 w-[145px] rounded-lg bg-[#303a52] text-center">초기화</span>
      <span class="h-20 w-[182px] rounded-lg bg-[#303a52] text-center">코드 실행</span>
      <span class="mr-10 h-20 w-[279px] rounded-lg bg-[#2e3f65] text-center">제출 후 채점하기</span>
    </footer>
  </div>
  <div class="pointer-events-none absolute inset-0 rounded-[20px] border-2 border-[#6b6f78]/80"></div>
</div>

<!-- result dialog -->
<div class="absolute left-[840px] top-[352px] flex h-[744px] w-[1200px] flex-col rounded-lg bg-white px-[80px] text-[#2b3749] shadow-[0_40px_90px_rgba(34,42,54,0.5)]">
  <div class="mt-[68px] flex items-center"><h1 class="text-[52px] leading-[70px] font-bold tracking-[-0.5px]">정답입니다!</h1><svg class="ml-auto mt-[8px] mr-[3px] size-[26px]" viewBox="0 0 26 26"><path d="M3 3l20 20M23 3 3 23" stroke="#d7d7d7" stroke-width="8"/></svg></div>
  <p class="mt-[82px] text-[32px] leading-[48px]">점수를 획득하였습니다!</p>
  <p class="mt-[10px] text-[113px] leading-[136px] font-bold whitespace-nowrap"><span class="tracking-[3.300px]">1176</span> <span class="inline-block translate-y-1">(</span>+4<span class="inline-block translate-y-1">)</span></p>
  <div class="mt-[170px] mr-[8px] flex justify-end gap-4 text-[32px] leading-[80px] font-medium"><span class="h-20 w-[115px] rounded-lg bg-[#ebecf1] text-center">닫기</span><span class="h-20 w-[346px] rounded-lg bg-[#3577f8] text-center font-bold tracking-[0.2px] text-white">다른 사람의 풀이 보기</span></div>
</div>

<!-- dock -->
<div class="absolute left-[958px] top-[1640px] flex h-[150px] w-[963px] rounded-[44px] border-2 border-white/20 bg-[linear-gradient(90deg,#1e132e_0%,#20143a_35%,#22144a_65%,#3b1458_85%,#4a1468_100%)] pl-5">
  <div class="flex w-32 flex-col items-start"><svg class="mt-[18px] size-[100px]" viewBox="0 0 100 100"><defs><linearGradient id="fb" x1="0" y1="0" x2="0" y2="1"><stop offset="0" stop-color="#5ccaf8"/><stop offset="1" stop-color="#3868e8"/></linearGradient><linearGradient id="fw" x1="0" y1="0" x2="0" y2="1"><stop offset="0" stop-color="#f2f2f4"/><stop offset="1" stop-color="#d3d9e4"/></linearGradient><clipPath id="fc"><rect y="1" width="97" height="97" rx="22"/></clipPath></defs><g clip-path="url(#fc)"><rect width="100" height="100" fill="url(#fw)"/><path d="M0 0h53C45 20 41 38 40 58h15c0 14 1 28 5 42H0Z" fill="url(#fb)"/></g><path d="M26 29v10M71 29v10" stroke="#333" stroke-width="4" stroke-linecap="round"/><path d="M20 67c14 16 44 16 58 0" fill="none" stroke="#111" stroke-width="2.800" stroke-linecap="round"/></svg><i class="mt-[18px] ml-[44px] size-2 rounded-full bg-[#ab94cd]"></i></div>
  <div class="w-32"><svg class="mt-[14px] -ml-[5px] size-[108px]" viewBox="0 0 108 108"><defs><linearGradient id="st" x1="0" y1="0" x2="0" y2="1"><stop offset="0" stop-color="#2764f7"/><stop offset="1" stop-color="#2055d0"/></linearGradient><linearGradient id="st2" x1="0" y1="0" x2="1" y2="1"><stop offset=".3" stop-color="#fff"/><stop offset=".9" stop-color="#5f8cf5"/></linearGradient></defs><circle cx="53.500" cy="53" r="52.500" fill="url(#st)"/><circle cx="53" cy="49" r="15.500" fill="none" stroke="url(#st2)" stroke-width="15"/><path d="M53 26.500A22.500 22.500 0 0 0 46 70.500V84h14V61.500h-7a8 8 0 1 1 0-20Z" fill="#fff"/></svg></div>
  <div class="flex w-32 flex-col items-start"><svg class="mt-[18px] -ml-[1px] size-[100px]" viewBox="0 0 100 100"><defs><linearGradient id="te" x1="0" y1="0" x2="0" y2="1"><stop offset="0" stop-color="#c5d8e4"/><stop offset="1" stop-color="#77777b"/></linearGradient></defs><rect x="1" y="1" width="96" height="97" rx="22" fill="url(#te)"/><rect x="4" y="4.500" width="90" height="90" rx="19" fill="#000"/><rect x="11" y="12" width="76" height="75" rx="12" fill="#172023"/><rect x="32" y="17" width="10" height="21" fill="#2b6e25"/><text x="16" y="35" font-family="DejaVu Sans Mono" font-weight="bold" font-size="20" fill="#5fe04b">$</text></svg><i class="mt-[18px] ml-[44px] size-2 rounded-full bg-[#ab94cd]"></i></div>
  <div class="flex w-32 flex-col items-start"><svg class="mt-[18px] size-[100px]" viewBox="0 0 100 100"><rect y="1" width="97" height="97" rx="22" fill="#f4f3f7"/><circle cx="48.500" cy="50" r="42" fill="#f6c043"/><path d="M48.500 50 12.100 29A42 42 0 0 1 84.900 29Z" fill="#e0523f"/><path d="M12.100 29A42 42 0 0 0 48.500 92L66.700 60.500 48.500 50 30.300 60.500Z" fill="#4fa355"/><path d="M48.500 29H84.900A42 42 0 0 1 48.500 92L66.700 60.500Z" fill="#f6c043"/><circle cx="48.500" cy="50" r="20.500" fill="#fff"/><circle cx="48.500" cy="50" r="16.500" fill="#4a80ea"/></svg><i class="mt-[18px] ml-[44px] size-2 rounded-full bg-[#ab94cd]"></i></div>
  <div class="flex w-32 flex-col items-start"><svg class="mt-[18px] size-[100px]" viewBox="0 0 100 100"><defs><linearGradient id="dc" x1="0" y1="0" x2="0" y2="1"><stop offset="0" stop-color="#7a80ee"/><stop offset="1" stop-color="#5561ee"/></linearGradient></defs><rect y="1" width="97" height="97" rx="22" fill="url(#dc)"/><path d="M38 24c-6 1-11 3-14 5-8 12-11 26-10 41 5 4 11 6 17 8l4-7-6-4c12 6 27 6 39 0l-6 4 4 7c6-2 12-4 17-8 1-15-2-29-10-41-4-2-9-4-14-5l-2 4h-17Z" fill="#fff"/><ellipse cx="37" cy="52" rx="6" ry="7" fill="#555fd0"/><ellipse cx="60" cy="52" rx="6" ry="7" fill="#555fd0"/></svg><i class="mt-[18px] ml-[44px] size-2 rounded-full bg-[#ab94cd]"></i></div>
  <div class="flex w-[141px] flex-col items-start"><svg class="mt-[18px] size-[100px]" viewBox="0 0 100 100"><defs><linearGradient id="ij" x1="0" y1="0" x2="1" y2="1"><stop offset="0" stop-color="#fdb44b"/><stop offset=".13" stop-color="#f0406a"/><stop offset=".32" stop-color="#a73fb8"/><stop offset=".42" stop-color="#2a6df0"/><stop offset=".7" stop-color="#2f8cf5"/><stop offset="1" stop-color="#6c5be8"/></linearGradient><linearGradient id="ij2" x1="0" y1="0" x2="1" y2="1"><stop offset="0" stop-color="#3a0a33"/><stop offset=".6" stop-color="#000"/></linearGradient></defs><rect x="1" y="4" width="93" height="92" fill="url(#ij)"/><path d="M1 4l12 12M94 4 82 16M1 96l12-12M94 96 82 84M7 10h81v80H7Z" stroke="#6fc8fa" stroke-opacity=".45" fill="none"/><rect x="13" y="16" width="69" height="68" fill="url(#ij2)"/><rect x="22" y="71" width="25" height="5" fill="#fff"/><path d="M22 27h13M28.500 27v22M22 49h13M45 27h10v16q0 7-7 7-4 0-6-3" stroke="#fff" stroke-width="4.500" fill="none"/></svg><i class="mt-[18px] ml-[44px] size-2 rounded-full bg-[#ab94cd]"></i></div>
  <i class="mt-[18px] h-[110px] w-[2px] bg-[#6e5588]"></i>
  <svg class="mt-2 ml-[42px] h-[116px] w-[96px]" viewBox="0 0 96 116"><defs><linearGradient id="tr" x1="0" x2="1"><stop offset="0" stop-color="#66686a"/><stop offset=".3" stop-color="#85878a"/><stop offset=".6" stop-color="#585b5d"/><stop offset="1" stop-color="#7d7f81"/></linearGradient></defs><ellipse cx="47" cy="17" rx="41" ry="11" fill="#58595b" stroke="#98999b" stroke-width="2"/><path d="M10 20 12 7l10-3 5 3 8-7 6 7 10 4 8-9 5 9 12-3 6 12-8 10H16Z" fill="#e9eaea"/><path d="m34 12 8-3 3 6-7 4Z" fill="#43b7c9"/><path d="m52 16 8-9 6 9-8 6Z" fill="#4c4a52"/><path d="m16 12 8 2 5 8M68 10l3 10M44 12l3 10M22 6l4 8M34 4l-3 9M76 12l-5 10" stroke="#66676a" stroke-width="2" fill="none"/><path d="M6 19q40 17 82 0L80 102q-2 10-33 10t-33-10Z" fill="url(#tr)"/><path d="M34 28q12 3 28 0-6 20-16 18-8-4-12-18Z" fill="#b9bbbc" opacity=".5"/></svg>
</div>
</body>
</html>
